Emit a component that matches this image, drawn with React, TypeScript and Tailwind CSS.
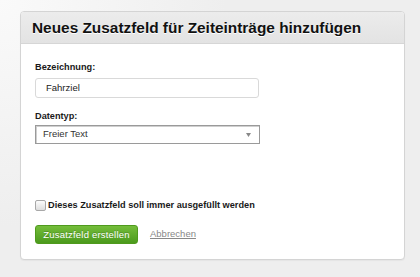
import React from 'react';

export default function App() {
  return (
    <div
      className="w-[420px] h-[277px] bg-[#eeeeee] bg-[radial-gradient(circle_at_0%_0%,#fafafa_0%,#eeeeee_45%)] pt-[11px] pl-[20px]"
      style={{ fontFamily: '"Liberation Sans", Arial, sans-serif' }}
    >
      <div className="w-[385px] h-[249px] bg-white border border-[#d4d4d4] rounded-[4px] shadow-[0_1px_1px_rgba(0,0,0,0.04)] overflow-hidden">
        <div className="h-[32px] bg-gradient-to-b from-[#ececec] to-[#e3e3e3] border-b border-[#d6d6d6] pl-[11px] flex items-center">
          <h1 className="text-[15.4px] font-bold text-[#111] leading-none [text-shadow:0_1px_0_#fff]">
            Neues Zusatzfeld für Zeiteinträge hinzufügen
          </h1>
        </div>

        <div className="pl-[14px] pt-[17px]">
          <label className="block text-[9.2px] font-bold text-[#1a1a1a] leading-[12px]">Bezeichnung:</label>
          <div className="mt-[5px] w-[224px] h-[20px] border border-[#d9d9d9] rounded-[3px] flex items-center pl-[10px] text-[9.5px] text-[#222]">
            Fahrziel
          </div>

          <label className="block mt-[12px] text-[9.2px] font-bold text-[#1a1a1a] leading-[12px]">Datentyp:</label>
          <div className="mt-[3px] w-[225px] h-[19px] border border-[#9a9a9a] shadow-[inset_1px_1px_0_#cfcfcf] flex items-center justify-between pl-[7px] pr-[8px] text-[9.5px] text-[#333]">
            <span>Freier Text</span>
            <svg width="5" height="4" viewBox="0 0 5 4">
              <path d="M0 0 L5 0 L2.5 4 Z" fill="#888" />
            </svg>
          </div>

          <div className="mt-[55px] flex items-center gap-[2px]">
            <span className="w-[11px] h-[11px] border border-[#a8a8a8] rounded-[2px] bg-gradient-to-b from-[#fdfdfd] to-[#dedede]" />
            <span className="text-[9.2px] font-bold text-[#1a1a1a] leading-[12px]">
              Dieses Zusatzfeld soll immer ausgefüllt werden
            </span>
          </div>

          <div className="mt-[14px] flex items-center gap-[12px]">
            <button
              type="button"
              className="w-[103px] h-[19px] rounded-[3px] border border-[#4f9a1d] bg-gradient-to-b from-[#74bd3a] to-[#4b9a1c] text-white text-[9.5px] whitespace-nowrap tracking-[0.2px] leading-none [text-shadow:0_-1px_0_rgba(0,0,0,0.2)]"
            >
              Zusatzfeld erstellen
            </button>
            <a className="text-[9.5px] text-[#888] underline">Abbrechen</a>
          </div>
        </div>
      </div>
    </div>
  );
}
